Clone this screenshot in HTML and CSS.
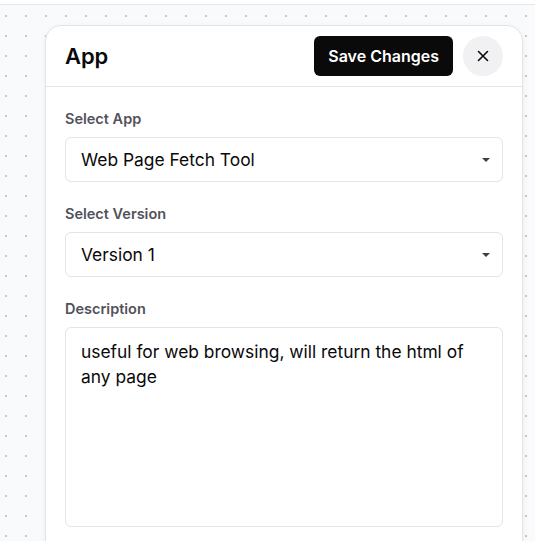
FILE: index.html
```html
<!DOCTYPE html>
<html>
<head>
<meta charset="utf-8">
<link rel="stylesheet" href="styles.css">
</head>
<body>
<div class="topbar"></div>
<div class="canvas">
  <div class="panel">
    <div class="header">
      <h1 class="title">App</h1>
      <div class="actions">
        <button class="save">Save Changes</button>
        <button class="close" aria-label="Close">
          <svg width="16" height="16" viewBox="0 0 16 16"><path d="M3.5 3.5 L12.5 12.5 M12.5 3.5 L3.5 12.5" stroke="#0a0a0a" stroke-width="1.6" stroke-linecap="round" fill="none"/></svg>
        </button>
      </div>
    </div>
    <div class="body">
      <div class="field">
        <div class="label">Select App</div>
        <div class="select"><span>Web Page Fetch Tool</span><span class="caret"></span></div>
      </div>
      <div class="field">
        <div class="label">Select Version</div>
        <div class="select"><span>Version 1</span><span class="caret"></span></div>
      </div>
      <div class="field">
        <div class="label">Description</div>
        <div class="textarea">useful for web browsing, will return the html of any page</div>
      </div>
    </div>
  </div>
</div>
</body>
</html>
```
FILE: styles.css
```css
* { box-sizing: border-box; }
html, body { margin: 0; padding: 0; height: 100%; overflow: hidden; }
body {
  font-family: Inter, "Noto Sans", sans-serif;
  background: #ffffff;
  color: #0a0a0a;
}
.topbar {
  height: 5px;
  border-bottom: 1px solid #e7e7ea;
  background: #ffffff;
}
.canvas {
  height: calc(100% - 5px);
  background-color: #f9fafb;
  background-image: radial-gradient(circle at 1px 1px, #c4c6cc 0.7px, transparent 0.9px);
  background-size: 20px 20px;
  background-position: 5px 10px;
  padding: 20px 12px 0 45px;
}
.panel {
  width: 478px;
  height: 600px;
  background: #ffffff;
  border: 1px solid #e4e4e7;
  border-radius: 16px;
  box-shadow: 0 2px 6px rgba(0,0,0,0.06);
}
.header {
  display: flex;
  align-items: center;
  justify-content: space-between;
  height: 61px;
  padding: 0 19px 0 19px;
  border-bottom: 1px solid #e4e4e7;
}
.title {
  margin: 0;
  font-size: 22px;
  font-weight: 600;
  letter-spacing: -0.1px;
}
.actions { display: flex; gap: 10px; align-items: center; }
.save {
  height: 40px;
  padding: 0 14px;
  border: none;
  border-radius: 6px;
  background: #0a0a0a;
  color: #fff;
  font-family: inherit;
  font-size: 16px;
  font-weight: 600;
}
.close {
  width: 40px;
  height: 40px;
  border: none;
  border-radius: 50%;
  background: #f1f1f3;
  display: flex;
  align-items: center;
  justify-content: center;
  padding: 0;
}
.body {
  padding: 22px 19px 0 19px;
  display: flex;
  flex-direction: column;
  gap: 22px;
}
.label {
  font-size: 14.5px;
  font-weight: 600;
  color: #52525b;
  line-height: 20px;
  margin-bottom: 8px;
}
.select {
  height: 45px;
  border: 1px solid #e4e4e7;
  border-radius: 6px;
  display: flex;
  align-items: center;
  justify-content: space-between;
  padding: 0 12px 0 15px;
  font-size: 17.4px;
}
.caret {
  width: 0; height: 0;
  border-left: 4.5px solid transparent;
  border-right: 4.5px solid transparent;
  border-top: 4.5px solid #3f3f46;
}
.textarea {
  height: 200px;
  border: 1px solid #e4e4e7;
  border-radius: 6px;
  padding: 11px 15px;
  font-size: 17.4px;
  line-height: 25px;
}
```
